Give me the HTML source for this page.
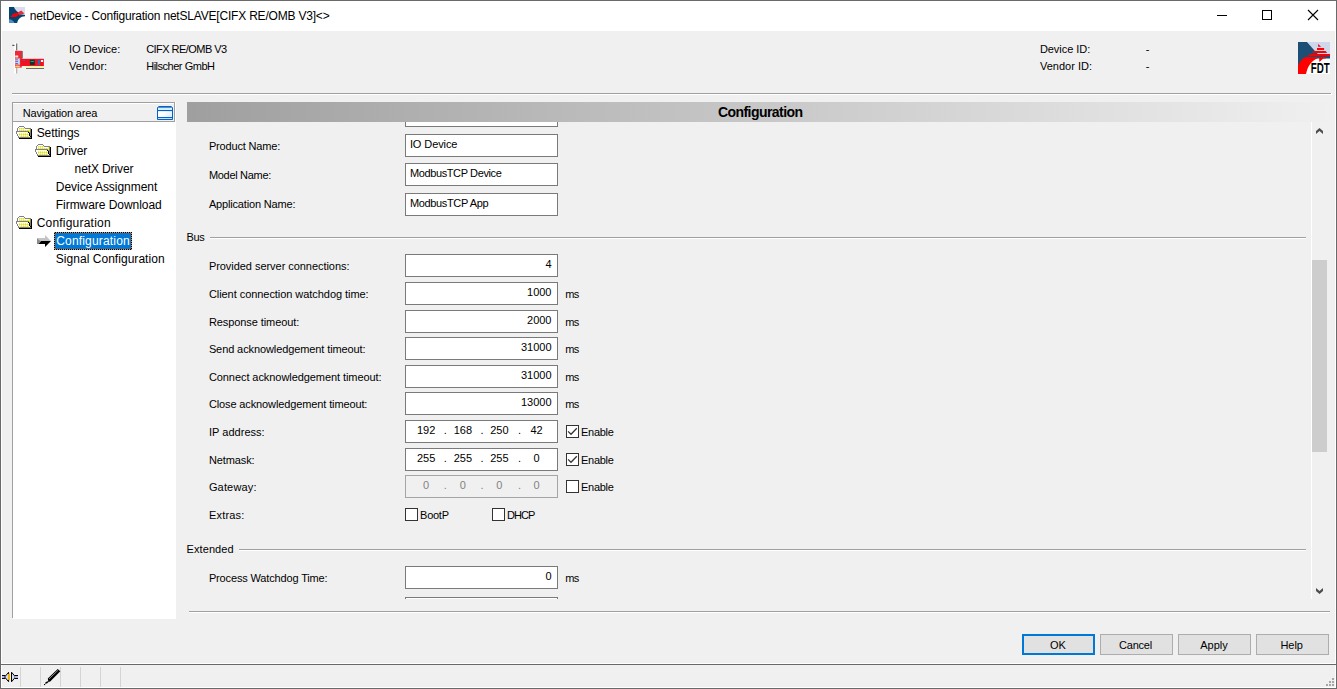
<!DOCTYPE html>
<html lang="en">
<head>
<meta charset="utf-8">
<title>netDevice - Configuration netSLAVE[CIFX RE/OMB V3]</title>
<style>
html,body{margin:0;padding:0;}
body{width:1337px;height:689px;overflow:hidden;background:#f0f0f0;position:relative;
  font-family:"Liberation Sans",sans-serif;color:#000;}
.a{position:absolute;box-sizing:border-box;}
.t{position:absolute;white-space:nowrap;display:block;}
.fld{position:absolute;box-sizing:border-box;left:405px;width:153px;height:23px;background:#fff;border:1px solid #7a7a7a;}
.fld.dis{background:#f0f0f0;border-color:#a5a5a5;}
.cb{position:absolute;box-sizing:border-box;width:13px;height:13px;background:#fff;border:1px solid #333;}
.hl{position:absolute;height:1px;background:#a0a0a0;box-shadow:0 1px 0 #fff;}
.btn{position:absolute;box-sizing:border-box;width:73px;height:21px;top:634px;background:#e1e1e1;border:1px solid #adadad;}
.sep{position:absolute;top:667px;width:1px;height:20px;background:#d4d4d4;}
svg{position:absolute;overflow:visible;}
</style>
</head>
<body>
<!-- window frame -->
<div class="a" style="left:0;top:0;width:1337px;height:689px;border:1px solid #6a6a6a;"></div>
<div class="a" style="left:1px;top:1px;width:1335px;height:687px;border:1px solid #fff;border-top:none;"></div>
<!-- title bar -->
<div class="a" style="left:1px;top:1px;width:1335px;height:30px;background:#fff;"></div>

<!-- header separator -->
<div class="hl" style="left:12px;top:93px;width:1320px;"></div>
<div class="a" style="left:1331px;top:93px;width:1px;height:2px;background:#fff;"></div>

<!-- navigation panel -->
<div class="a" style="left:13px;top:122px;width:163px;height:497px;background:#fff;"></div>
<div class="a" style="left:12px;top:102px;width:1px;height:516px;background:#a0a0a0;"></div>
<div class="a" style="left:12px;top:102px;width:163px;height:20px;border:1px solid #a0a0a0;border-left:none;"></div>
<div class="a" style="left:13px;top:103px;width:161px;height:1px;background:#fff;"></div>
<div class="a" style="left:175px;top:102px;width:1px;height:21px;background:#fff;"></div>
<div class="a" style="left:54px;top:232px;width:78px;height:18px;background:repeating-conic-gradient(#000 0 25%,#ff8728 0 50%) 0 0/2px 2px;"></div>
<div class="a" style="left:55px;top:233px;width:76px;height:16px;background:#0078d7;"></div>

<!-- config header gradient -->
<div class="a" style="left:187px;top:102px;width:1145px;height:20px;background:linear-gradient(to right,#9f9f9f,#f0f0f0);"></div>

<!-- scroll area -->
<div class="a" style="left:1311px;top:122px;width:1px;height:477px;background:#fff;"></div>
<div class="a" style="left:1312px;top:260px;width:15px;height:192px;background:#cdcdcd;"></div>

<!-- form fields -->
<div class="fld" style="top:104px;height:23px;clip-path:inset(18px 0 0 0);"></div>
<div class="fld" style="top:134px;"></div>
<div class="fld" style="top:163px;"></div>
<div class="fld" style="top:193px;"></div>
<div class="hl" style="left:210px;top:237px;width:1096px;"></div>
<div class="fld" style="top:254px;"></div>
<div class="fld" style="top:282px;"></div>
<div class="fld" style="top:310px;"></div>
<div class="fld" style="top:337px;"></div>
<div class="fld" style="top:365px;"></div>
<div class="fld" style="top:392px;"></div>
<div class="fld" style="top:420px;"></div>
<div class="fld" style="top:448px;"></div>
<div class="fld dis" style="top:475px;"></div>
<div class="hl" style="left:239px;top:549px;width:1067px;"></div>
<div class="fld" style="top:566px;"></div>
<div class="fld" style="top:597px;clip-path:inset(0 0 21px 0);"></div>

<!-- checkboxes -->
<div class="cb" style="left:566px;top:425px;"></div>
<div class="cb" style="left:566px;top:453px;"></div>
<div class="cb" style="left:566px;top:480px;"></div>
<div class="cb" style="left:405px;top:508px;"></div>
<div class="cb" style="left:492px;top:508px;"></div>

<!-- bottom separator -->
<div class="hl" style="left:189px;top:611px;width:1141px;"></div>

<!-- buttons -->
<div class="btn" style="left:1022px;border:2px solid #0078d7;"></div>
<div class="btn" style="left:1100px;"></div>
<div class="btn" style="left:1178px;"></div>
<div class="btn" style="left:1256px;"></div>

<!-- status bar -->
<div class="a" style="left:1px;top:663px;width:1335px;height:1px;background:#fff;"></div>
<div class="a" style="left:1px;top:664px;width:1335px;height:1px;background:#696969;"></div>
<div class="sep" style="left:20px;"></div>
<div class="sep" style="left:40px;"></div>
<div class="sep" style="left:60px;"></div>
<div class="sep" style="left:80px;"></div>
<div class="sep" style="left:100px;"></div>
<div class="sep" style="left:120px;"></div>

<!-- title icon -->
<svg style="left:9px;top:7px;" width="16" height="16" viewBox="0 0 16 16">
<path d="M5,0 H16 V8.5 L8,5 Z" fill="#d9ddee"/>
<path d="M0,0 H5 C6,2.5 7.5,4 9,5 L12,7.2 L16,8 V9.3 C11.5,9.5 9,12 8.2,16 H0 Z" fill="#04446e"/>
<path d="M0,12.2 C2.5,12.4 4.6,13.8 5.6,16 H0 Z" fill="#4f8fc8"/>
<path d="M1.2,9.7 L4.6,6.6 L8,6 L9,5.4 L10.2,7.2 L7,10 H1.2 Z" fill="#f00008"/><path d="M8.6,5.4 L12.3,3.6 L15.4,6.4 L12,7.6 L10.4,8.5 L9.9,7.3 Z" fill="#e2303c"/>
</svg>
<!-- device (PCI card) icon -->
<svg style="left:0;top:0;" width="60" height="80" viewBox="0 0 60 80">
<rect x="14" y="43" width="2.3" height="30.5" fill="#fff"/>
<rect x="16.3" y="43.5" width="0.9" height="7" fill="#444"/>
<rect x="12.3" y="44.8" width="2.2" height="1" fill="#333"/>
<rect x="16.3" y="67.5" width="0.9" height="6" fill="#999"/>
<rect x="15" y="50.8" width="6.8" height="16.8" fill="#ee2a3a"/>
<rect x="21.6" y="51" width="1" height="7.5" fill="#5a3030"/>
<rect x="20.5" y="58.8" width="23.4" height="7.2" fill="#f01020"/>
<rect x="15.2" y="55.5" width="3" height="2" fill="#ffe9c0"/>
<rect x="15.2" y="58.5" width="4.8" height="6" fill="#e6d8e6"/>
<rect x="15.4" y="59.4" width="2.5" height="0.9" fill="#5a50c8"/>
<rect x="15.4" y="61.2" width="2.5" height="0.9" fill="#5a50c8"/>
<rect x="15.4" y="63" width="2.5" height="0.9" fill="#5a50c8"/>
<rect x="18.6" y="59" width="1.4" height="5.5" fill="#9ed0f0"/>
<rect x="15.2" y="65.6" width="4.6" height="1.6" fill="#ffd060"/>
<rect x="29.9" y="59.9" width="4.9" height="5" fill="#08382c"/>
<rect x="30.6" y="61" width="3.4" height="1" fill="#2a9a86"/>
<rect x="37.9" y="60" width="2.1" height="5" fill="#2a6ab4"/>
<rect x="40.9" y="60" width="2.2" height="2" fill="#fff"/>
<rect x="23" y="60" width="2" height="1" fill="#6a50b0"/>
<rect x="25.2" y="66" width="18.7" height="1.9" fill="#fff2a8"/>
<rect x="26" y="68" width="18" height="0.9" fill="#5a5a5a"/>
</svg>
<!-- FDT icon -->
<svg style="left:1298px;top:42px;overflow:hidden;" width="32" height="32" viewBox="0 0 32 32">
<rect width="32" height="32" fill="#fff"/>
<path d="M9,0 H32 V13 H20 Z" fill="#cfd8ea"/>
<path d="M0,0 H9 L16.5,8.5 L20,12 H32 V16.5 H17 L14,19 L0,24 Z" fill="#1c4f75"/>
<path d="M0,23.5 C2,19 4.5,16.5 7.5,15 H19.5 V16.2 C14,18.5 10,23 8,32 H0 Z" fill="#ff0000"/>
<path d="M20.1,1.9 V4.8 H23.1 Z" fill="#ff0000"/>
<rect x="19" y="6" width="7.1" height="2" fill="#ff0000"/>
<path d="M15.5,9.1 H27.6 L29.1,11 H14 Z" fill="#ff0000"/>
<rect x="11" y="12.1" width="21" height="1.8" fill="#ff0000"/>
<path d="M21,15 H29 L27.5,16.4 H25.3 L21.4,20 Z" fill="#ff0000"/>
<text x="12.8" y="30.9" font-family="Liberation Sans, sans-serif" font-weight="bold" font-size="14.4" textLength="19.0" lengthAdjust="spacingAndGlyphs" fill="#000">FDT</text>
</svg>
<!-- navigation area icon -->
<svg style="left:157px;top:106px;" width="16" height="14" viewBox="0 0 16 14">
<defs><linearGradient id="ng" x1="0" y1="0" x2="1" y2="1"><stop offset="0.45" stop-color="#fff"/><stop offset="1" stop-color="#cfe3fb"/></linearGradient></defs>
<path d="M0.5,1.6 L1.6,0.5 H14.4 L15.5,1.6 V13.5 H0.5 Z" fill="url(#ng)" stroke="#0560c8"/>
<rect x="1" y="1" width="14" height="0.8" fill="#0058c0"/>
<rect x="1" y="1.8" width="14" height="2.2" fill="#cdf1ff"/>
<rect x="1" y="4" width="14" height="1.1" fill="#0560c8"/>
<rect x="1" y="11" width="14" height="1" fill="#0560c8"/>
<rect x="1" y="12" width="14" height="1" fill="#bfe6ff"/>
</svg>
<!-- folder icons -->
<svg width="0" height="0" style="left:0;top:0;"><defs>
<pattern id="dz" width="2" height="2" patternUnits="userSpaceOnUse"><rect width="2" height="2" fill="#fff"/><rect width="1" height="1" fill="#ffff00"/><rect x="1" y="1" width="1" height="1" fill="#ffff00"/><rect x="1" y="0" width="1" height="1" fill="#c8c8e0"/></pattern>
</defs></svg>
<svg style="left:16px;top:126px;" width="17" height="14" viewBox="0 0 17 14"><g shape-rendering="crispEdges">
<path d="M2,1 H9 V2 H15 V12 H3 V6 H2 Z" fill="#fff"/>
<rect x="3" y="2" width="6" height="3" fill="url(#dz)"/>
<rect x="9" y="4" width="4" height="1" fill="url(#dz)"/>
<rect x="13" y="3" width="1" height="3" fill="#ffff00"/>
<rect x="3" y="0" width="5" height="1" fill="#808080"/>
<rect x="2" y="1" width="1" height="1" fill="#808080"/><rect x="8" y="1" width="1" height="1" fill="#808080"/>
<rect x="1" y="2" width="1" height="3" fill="#808080"/>
<rect x="9" y="2" width="6" height="1" fill="#808080"/>
<rect x="14" y="3" width="1" height="9" fill="#808080"/>
<rect x="13" y="6" width="1" height="5" fill="#808080"/>
<rect x="15" y="3" width="1" height="10" fill="#000"/>
<rect x="3" y="12" width="13" height="1" fill="#000"/>
<path d="M1,6 H12 L14,11 H3.5 L1,8 Z" fill="#fff"/>
<path d="M2,7 H12 L13.6,11 H4 Z" fill="url(#dz)"/>
<rect x="0" y="5" width="13" height="1" fill="#808080"/>
<rect x="0" y="6" width="1" height="2" fill="#808080"/>
<rect x="1" y="8" width="1" height="2" fill="#808080"/>
<rect x="2" y="10" width="1" height="2" fill="#808080"/>
<rect x="3" y="11" width="11" height="1" fill="#808080"/>
<path d="M12,6 H13 V7 H13.5 V8.5 H14 V10 H14.5 V11 H13.5 V9.5 H13 V8 H12.5 V7 H12 Z" fill="#000"/>
</g></svg>
<svg style="left:35px;top:144px;" width="17" height="14" viewBox="0 0 17 14"><g shape-rendering="crispEdges">
<path d="M2,1 H9 V2 H15 V12 H3 V6 H2 Z" fill="#fff"/>
<rect x="3" y="2" width="6" height="3" fill="url(#dz)"/>
<rect x="9" y="4" width="4" height="1" fill="url(#dz)"/>
<rect x="13" y="3" width="1" height="3" fill="#ffff00"/>
<rect x="3" y="0" width="5" height="1" fill="#808080"/>
<rect x="2" y="1" width="1" height="1" fill="#808080"/><rect x="8" y="1" width="1" height="1" fill="#808080"/>
<rect x="1" y="2" width="1" height="3" fill="#808080"/>
<rect x="9" y="2" width="6" height="1" fill="#808080"/>
<rect x="14" y="3" width="1" height="9" fill="#808080"/>
<rect x="13" y="6" width="1" height="5" fill="#808080"/>
<rect x="15" y="3" width="1" height="10" fill="#000"/>
<rect x="3" y="12" width="13" height="1" fill="#000"/>
<path d="M1,6 H12 L14,11 H3.5 L1,8 Z" fill="#fff"/>
<path d="M2,7 H12 L13.6,11 H4 Z" fill="url(#dz)"/>
<rect x="0" y="5" width="13" height="1" fill="#808080"/>
<rect x="0" y="6" width="1" height="2" fill="#808080"/>
<rect x="1" y="8" width="1" height="2" fill="#808080"/>
<rect x="2" y="10" width="1" height="2" fill="#808080"/>
<rect x="3" y="11" width="11" height="1" fill="#808080"/>
<path d="M12,6 H13 V7 H13.5 V8.5 H14 V10 H14.5 V11 H13.5 V9.5 H13 V8 H12.5 V7 H12 Z" fill="#000"/>
</g></svg>
<svg style="left:16px;top:216px;" width="17" height="14" viewBox="0 0 17 14"><g shape-rendering="crispEdges">
<path d="M2,1 H9 V2 H15 V12 H3 V6 H2 Z" fill="#fff"/>
<rect x="3" y="2" width="6" height="3" fill="url(#dz)"/>
<rect x="9" y="4" width="4" height="1" fill="url(#dz)"/>
<rect x="13" y="3" width="1" height="3" fill="#ffff00"/>
<rect x="3" y="0" width="5" height="1" fill="#808080"/>
<rect x="2" y="1" width="1" height="1" fill="#808080"/><rect x="8" y="1" width="1" height="1" fill="#808080"/>
<rect x="1" y="2" width="1" height="3" fill="#808080"/>
<rect x="9" y="2" width="6" height="1" fill="#808080"/>
<rect x="14" y="3" width="1" height="9" fill="#808080"/>
<rect x="13" y="6" width="1" height="5" fill="#808080"/>
<rect x="15" y="3" width="1" height="10" fill="#000"/>
<rect x="3" y="12" width="13" height="1" fill="#000"/>
<path d="M1,6 H12 L14,11 H3.5 L1,8 Z" fill="#fff"/>
<path d="M2,7 H12 L13.6,11 H4 Z" fill="url(#dz)"/>
<rect x="0" y="5" width="13" height="1" fill="#808080"/>
<rect x="0" y="6" width="1" height="2" fill="#808080"/>
<rect x="1" y="8" width="1" height="2" fill="#808080"/>
<rect x="2" y="10" width="1" height="2" fill="#808080"/>
<rect x="3" y="11" width="11" height="1" fill="#808080"/>
<path d="M12,6 H13 V7 H13.5 V8.5 H14 V10 H14.5 V11 H13.5 V9.5 H13 V8 H12.5 V7 H12 Z" fill="#000"/>
</g></svg>
<!-- arrow icon -->
<svg style="left:0;top:0;" width="60" height="260" viewBox="0 0 60 260">
<path d="M37.3,238 H45 V235 L51,241 H40.5 Z" fill="#c4c4c4"/>
<path d="M37,238 L40.6,241.1 L38.6,244 H37 Z" fill="#8c8c8c"/>
<path d="M41,241 H51 L45,247 V244 H38.4 Z" fill="#000"/>
</svg>
<!-- checkmarks -->
<svg style="left:566px;top:425px;" width="13" height="13" viewBox="0 0 13 13"><path d="M2.1,6.4 L5,9.3 L10.8,3.2" fill="none" stroke="#333" stroke-width="1.25"/></svg>
<svg style="left:566px;top:453px;" width="13" height="13" viewBox="0 0 13 13"><path d="M2.1,6.4 L5,9.3 L10.8,3.2" fill="none" stroke="#333" stroke-width="1.25"/></svg>
<!-- title bar controls -->
<svg style="left:1210px;top:5px;" width="120" height="20" viewBox="1210 5 120 20" shape-rendering="crispEdges">
<rect x="1217" y="15" width="10" height="1" fill="#000"/>
<rect x="1262.5" y="10.5" width="9" height="9" fill="none" stroke="#000"/>
</svg>
<svg style="left:1308px;top:10px;" width="10" height="10" viewBox="0 0 10 10"><path d="M0,0 L10,10 M10,0 L0,10" stroke="#000" stroke-width="1.1" fill="none"/></svg>
<!-- scrollbar arrows -->
<svg style="left:1316px;top:128px;" width="7" height="6" viewBox="0 0 7 6"><path d="M0,3 L3.5,0 L7,3 V6 L3.5,3 L0,6 Z" fill="#4e4e4e"/></svg>
<svg style="left:1316px;top:588px;" width="7" height="6" viewBox="0 0 7 6"><path d="M0,0 L3.5,3 L7,0 V3 L3.5,6 L0,3 Z" fill="#4e4e4e"/></svg>
<!-- status bar icons -->
<svg style="left:0;top:664px;" width="70" height="25" viewBox="0 664 70 25">
<rect x="2" y="675.2" width="3.4" height="3.6" fill="#b4b4f2"/>
<rect x="2" y="675" width="3.4" height="1" fill="#000"/><rect x="2" y="678" width="3.4" height="1" fill="#000"/>
<path d="M4.6,677 L8.6,672.3 V681.7 Z" fill="#dcdcf4" stroke="#000" stroke-width="1"/>
<rect x="7.9" y="673.9" width="2" height="6" fill="#f2b000"/>
<path d="M11.5,672.2 V681.8 L15.6,677 Z" fill="#dcdcf4" stroke="#000" stroke-width="1"/>
<rect x="15" y="675.2" width="3" height="3.6" fill="#b4b4f2"/>
<rect x="15" y="675" width="3" height="1" fill="#000"/><rect x="15" y="678" width="3" height="1" fill="#000"/>
<path d="M47.8,678.5 L57.7,669 L60.3,671.3 L50.2,681.6 L48.4,681.9 Z" fill="#000"/>
<path d="M49,678.9 L58.2,670.1" stroke="#fff" stroke-width="0.75" stroke-dasharray="1 0.45" fill="none"/>
<path d="M45.2,683.9 L45.5,682.2 L47.6,681.3 L49,681.6 L47.2,683.2 Z" fill="#000"/>
<rect x="44" y="684" width="1.1" height="1.1" fill="#000"/>
</svg>
<!-- resize grip -->
<svg style="left:1326px;top:678px;" width="8" height="8" viewBox="0 0 8 8" shape-rendering="crispEdges">
<rect x="6" y="0" width="2" height="2" fill="#a6a6a6"/><rect x="3" y="3" width="2" height="2" fill="#a6a6a6"/><rect x="6" y="3" width="2" height="2" fill="#a6a6a6"/>
<rect x="0" y="6" width="2" height="2" fill="#a6a6a6"/><rect x="3" y="6" width="2" height="2" fill="#a6a6a6"/><rect x="6" y="6" width="2" height="2" fill="#a6a6a6"/>
</svg>


<span class="t" id="title" style="left:29.80px;top:4.03px;font-size:12px;line-height:24px;letter-spacing:-0.197px;">netDevice - Configuration netSLAVE[CIFX RE/OMB V3]&lt;&gt;</span>
<span class="t" id="h1" style="left:69.10px;top:38.36px;font-size:11px;line-height:22px;letter-spacing:-0.026px;">IO Device:</span>
<span class="t" id="h2" style="left:69.10px;top:55.36px;font-size:11px;line-height:22px;letter-spacing:0.025px;">Vendor:</span>
<span class="t" id="h3" style="left:146.20px;top:38.36px;font-size:11px;line-height:22px;letter-spacing:-0.538px;">CIFX RE/OMB V3</span>
<span class="t" id="h4" style="left:146.20px;top:55.36px;font-size:11px;line-height:22px;letter-spacing:-0.483px;">Hilscher GmbH</span>
<span class="t" id="h5" style="left:1039.90px;top:38.36px;font-size:11px;line-height:22px;letter-spacing:-0.045px;">Device ID:</span>
<span class="t" id="h6" style="left:1039.90px;top:55.36px;font-size:11px;line-height:22px;letter-spacing:0.032px;">Vendor ID:</span>
<span class="t" id="h7" style="left:1145.80px;top:38.36px;font-size:11px;line-height:22px;">-</span>
<span class="t" id="h8" style="left:1145.80px;top:55.36px;font-size:11px;line-height:22px;">-</span>
<span class="t" id="nav" style="left:22.70px;top:101.86px;font-size:11px;line-height:22px;letter-spacing:-0.171px;">Navigation area</span>
<span class="t" id="t1" style="left:36.70px;top:121.03px;font-size:12px;line-height:24px;letter-spacing:-0.082px;">Settings</span>
<span class="t" id="t2" style="left:55.80px;top:139.03px;font-size:12px;line-height:24px;letter-spacing:-0.117px;">Driver</span>
<span class="t" id="t3" style="left:74.60px;top:157.03px;font-size:12px;line-height:24px;letter-spacing:-0.112px;">netX Driver</span>
<span class="t" id="t4" style="left:55.80px;top:175.03px;font-size:12px;line-height:24px;letter-spacing:-0.032px;">Device Assignment</span>
<span class="t" id="t5" style="left:55.80px;top:193.03px;font-size:12px;line-height:24px;letter-spacing:-0.047px;">Firmware Download</span>
<span class="t" id="t6" style="left:36.70px;top:211.03px;font-size:12px;line-height:24px;letter-spacing:0.208px;">Configuration</span>
<span class="t" id="t7" style="left:56.20px;top:229.03px;font-size:12px;line-height:24px;letter-spacing:0.178px;color:#fff;">Configuration</span>
<span class="t" id="t8" style="left:55.80px;top:247.03px;font-size:12px;line-height:24px;letter-spacing:0.036px;">Signal Configuration</span>
<span class="t" id="cfg" style="left:717.90px;top:98.37px;font-size:14px;line-height:28px;letter-spacing:-0.551px;font-weight:bold;">Configuration</span>
<span class="t" id="l0" style="left:208.90px;top:135.36px;font-size:11px;line-height:22px;letter-spacing:-0.160px;">Product Name:</span>
<span class="t" id="l1" style="left:208.90px;top:164.36px;font-size:11px;line-height:22px;letter-spacing:-0.302px;">Model Name:</span>
<span class="t" id="l2" style="left:208.90px;top:193.36px;font-size:11px;line-height:22px;letter-spacing:-0.169px;">Application Name:</span>
<span class="t" id="l3" style="left:208.90px;top:255.36px;font-size:11px;line-height:22px;letter-spacing:-0.045px;">Provided server connections:</span>
<span class="t" id="l4" style="left:208.90px;top:283.36px;font-size:11px;line-height:22px;letter-spacing:-0.054px;">Client connection watchdog time:</span>
<span class="t" id="l5" style="left:208.90px;top:311.36px;font-size:11px;line-height:22px;letter-spacing:-0.078px;">Response timeout:</span>
<span class="t" id="l6" style="left:208.90px;top:338.36px;font-size:11px;line-height:22px;letter-spacing:-0.104px;">Send acknowledgement timeout:</span>
<span class="t" id="l7" style="left:208.90px;top:366.36px;font-size:11px;line-height:22px;letter-spacing:-0.068px;">Connect acknowledgement timeout:</span>
<span class="t" id="l8" style="left:208.90px;top:393.36px;font-size:11px;line-height:22px;letter-spacing:-0.121px;">Close acknowledgement timeout:</span>
<span class="t" id="l9" style="left:208.90px;top:421.36px;font-size:11px;line-height:22px;letter-spacing:0.032px;">IP address:</span>
<span class="t" id="l10" style="left:208.90px;top:449.36px;font-size:11px;line-height:22px;letter-spacing:-0.109px;">Netmask:</span>
<span class="t" id="l11" style="left:208.90px;top:476.36px;font-size:11px;line-height:22px;letter-spacing:0.166px;">Gateway:</span>
<span class="t" id="l12" style="left:208.90px;top:504.36px;font-size:11px;line-height:22px;letter-spacing:0.209px;">Extras:</span>
<span class="t" id="l13" style="left:208.90px;top:567.36px;font-size:11px;line-height:22px;letter-spacing:-0.148px;">Process Watchdog Time:</span>
<span class="t" id="bus" style="left:186.60px;top:226.36px;font-size:11px;line-height:22px;letter-spacing:-0.390px;">Bus</span>
<span class="t" id="ext" style="left:186.60px;top:538.36px;font-size:11px;line-height:22px;letter-spacing:0.077px;">Extended</span>
<span class="t" id="v1" style="left:409.90px;top:133.36px;font-size:11px;line-height:22px;letter-spacing:-0.089px;">IO Device</span>
<span class="t" id="v2" style="left:409.90px;top:162.36px;font-size:11px;line-height:22px;letter-spacing:-0.377px;">ModbusTCP Device</span>
<span class="t" id="v3" style="left:409.90px;top:192.36px;font-size:11px;line-height:22px;letter-spacing:-0.344px;">ModbusTCP App</span>
<span class="t" id="n0" style="left:551.50px;top:253.36px;font-size:11px;line-height:22px;transform:translateX(-100%);">4</span>
<span class="t" id="n1" style="left:551.50px;top:281.36px;font-size:11px;line-height:22px;transform:translateX(-100%);">1000</span>
<span class="t" id="n2" style="left:551.50px;top:309.36px;font-size:11px;line-height:22px;transform:translateX(-100%);">2000</span>
<span class="t" id="n3" style="left:551.50px;top:336.36px;font-size:11px;line-height:22px;transform:translateX(-100%);">31000</span>
<span class="t" id="n4" style="left:551.50px;top:364.36px;font-size:11px;line-height:22px;transform:translateX(-100%);">31000</span>
<span class="t" id="n5" style="left:551.50px;top:391.36px;font-size:11px;line-height:22px;transform:translateX(-100%);">13000</span>
<span class="t" id="n6" style="left:551.50px;top:565.36px;font-size:11px;line-height:22px;transform:translateX(-100%);">0</span>
<span class="t" id="ms0" style="left:565.20px;top:283.36px;font-size:11px;line-height:22px;letter-spacing:-0.636px;">ms</span>
<span class="t" id="ms1" style="left:565.20px;top:311.36px;font-size:11px;line-height:22px;letter-spacing:-0.636px;">ms</span>
<span class="t" id="ms2" style="left:565.20px;top:338.36px;font-size:11px;line-height:22px;letter-spacing:-0.636px;">ms</span>
<span class="t" id="ms3" style="left:565.20px;top:366.36px;font-size:11px;line-height:22px;letter-spacing:-0.636px;">ms</span>
<span class="t" id="ms4" style="left:565.20px;top:393.36px;font-size:11px;line-height:22px;letter-spacing:-0.636px;">ms</span>
<span class="t" id="ms5" style="left:565.20px;top:567.36px;font-size:11px;line-height:22px;letter-spacing:-0.636px;">ms</span>
<span class="t" id="ao0" style="left:426.10px;top:419.36px;font-size:11px;line-height:22px;transform:translateX(-50%);">192</span>
<span class="t" id="ao1" style="left:462.90px;top:419.36px;font-size:11px;line-height:22px;transform:translateX(-50%);">168</span>
<span class="t" id="ao2" style="left:499.40px;top:419.36px;font-size:11px;line-height:22px;transform:translateX(-50%);">250</span>
<span class="t" id="ao3" style="left:536.60px;top:419.36px;font-size:11px;line-height:22px;transform:translateX(-50%);">42</span>
<span class="t" id="ad0" style="left:445.30px;top:419.36px;font-size:11px;line-height:22px;transform:translateX(-50%);">.</span>
<span class="t" id="ad1" style="left:482.00px;top:419.36px;font-size:11px;line-height:22px;transform:translateX(-50%);">.</span>
<span class="t" id="ad2" style="left:519.50px;top:419.36px;font-size:11px;line-height:22px;transform:translateX(-50%);">.</span>
<span class="t" id="bo0" style="left:426.10px;top:447.36px;font-size:11px;line-height:22px;transform:translateX(-50%);">255</span>
<span class="t" id="bo1" style="left:462.90px;top:447.36px;font-size:11px;line-height:22px;transform:translateX(-50%);">255</span>
<span class="t" id="bo2" style="left:499.40px;top:447.36px;font-size:11px;line-height:22px;transform:translateX(-50%);">255</span>
<span class="t" id="bo3" style="left:536.60px;top:447.36px;font-size:11px;line-height:22px;transform:translateX(-50%);">0</span>
<span class="t" id="bd0" style="left:445.30px;top:447.36px;font-size:11px;line-height:22px;transform:translateX(-50%);">.</span>
<span class="t" id="bd1" style="left:482.00px;top:447.36px;font-size:11px;line-height:22px;transform:translateX(-50%);">.</span>
<span class="t" id="bd2" style="left:519.50px;top:447.36px;font-size:11px;line-height:22px;transform:translateX(-50%);">.</span>
<span class="t" id="co0" style="left:426.10px;top:474.36px;font-size:11px;line-height:22px;transform:translateX(-50%);color:#838383;">0</span>
<span class="t" id="co1" style="left:462.90px;top:474.36px;font-size:11px;line-height:22px;transform:translateX(-50%);color:#838383;">0</span>
<span class="t" id="co2" style="left:499.40px;top:474.36px;font-size:11px;line-height:22px;transform:translateX(-50%);color:#838383;">0</span>
<span class="t" id="co3" style="left:536.60px;top:474.36px;font-size:11px;line-height:22px;transform:translateX(-50%);color:#838383;">0</span>
<span class="t" id="cd0" style="left:445.30px;top:474.36px;font-size:11px;line-height:22px;transform:translateX(-50%);color:#838383;">.</span>
<span class="t" id="cd1" style="left:482.00px;top:474.36px;font-size:11px;line-height:22px;transform:translateX(-50%);color:#838383;">.</span>
<span class="t" id="cd2" style="left:519.50px;top:474.36px;font-size:11px;line-height:22px;transform:translateX(-50%);color:#838383;">.</span>
<span class="t" id="en0" style="left:581.10px;top:421.36px;font-size:11px;line-height:22px;letter-spacing:-0.311px;">Enable</span>
<span class="t" id="en1" style="left:581.10px;top:449.36px;font-size:11px;line-height:22px;letter-spacing:-0.311px;">Enable</span>
<span class="t" id="en2" style="left:581.10px;top:476.36px;font-size:11px;line-height:22px;letter-spacing:-0.311px;">Enable</span>
<span class="t" id="bootp" style="left:420.10px;top:504.36px;font-size:11px;line-height:22px;letter-spacing:-0.274px;">BootP</span>
<span class="t" id="dhcp" style="left:507.10px;top:504.36px;font-size:11px;line-height:22px;letter-spacing:-0.943px;">DHCP</span>
<span class="t" id="b0" style="left:1050.10px;top:634.36px;font-size:11px;line-height:22px;letter-spacing:-0.253px;">OK</span>
<span class="t" id="b1" style="left:1119.00px;top:634.36px;font-size:11px;line-height:22px;letter-spacing:-0.208px;">Cancel</span>
<span class="t" id="b2" style="left:1200.30px;top:634.36px;font-size:11px;line-height:22px;letter-spacing:-0.046px;">Apply</span>
<span class="t" id="b3" style="left:1280.40px;top:634.36px;font-size:11px;line-height:22px;letter-spacing:-0.031px;">Help</span>
</body>
</html>
